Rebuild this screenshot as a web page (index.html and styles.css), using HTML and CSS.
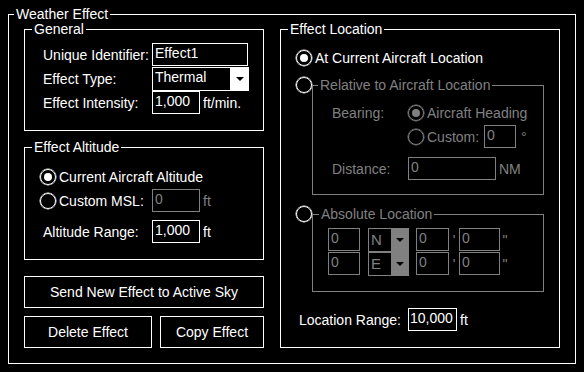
FILE: index.html
```html
<!DOCTYPE html>
<html>
<head>
    <title>Weather Effect</title>
    <link rel="stylesheet" href="styles.css">
</head>
<body>

    <fieldset class="group outer">
        <legend>Weather Effect</legend>
        <div class="columns">

            <div class="col-left">
                <fieldset class="group general">
                    <legend>General</legend>
                    <div class="row">
                        <span class="label">Unique Identifier:</span>
                        <input class="field id-field" value="Effect1">
                    </div>
                    <div class="row">
                        <span class="label">Effect Type:</span>
                        <div class="combo type-combo"><span class="combo-text">Thermal</span><span class="combo-drop"></span></div>
                    </div>
                    <div class="row">
                        <span class="label">Effect Intensity:</span>
                        <input class="field num" value="1,000"><span class="unit">ft/min.</span>
                    </div>
                </fieldset>

                <fieldset class="group altitude">
                    <legend>Effect Altitude</legend>
                    <div class="row">
                        <span class="radio on"></span><span class="radio-text">Current Aircraft Altitude</span>
                    </div>
                    <div class="row">
                        <span class="radio"></span><span class="radio-text short">Custom MSL:</span>
                        <input class="field num dis" value="0" disabled><span class="unit dis">ft</span>
                    </div>
                    <div class="row range-row">
                        <span class="label">Altitude Range:</span>
                        <input class="field num" value="1,000"><span class="unit">ft</span>
                    </div>
                </fieldset>

                <button class="btn send">Send New Effect to Active Sky</button>
                <div class="btn-row">
                    <button class="btn delete">Delete Effect</button>
                    <button class="btn copy">Copy Effect</button>
                </div>
            </div>

            <fieldset class="group location">
                <legend>Effect Location</legend>
                <div class="row">
                    <span class="radio on"></span><span class="radio-text">At Current Aircraft Location</span>
                </div>

                <div class="sub-row relative">
                    <span class="radio"></span>
                    <fieldset class="group sub dis">
                        <legend>Relative to Aircraft Location</legend>
                        <div class="row">
                            <span class="sub-label">Bearing:</span>
                            <span class="radio on"></span><span class="radio-text">Aircraft Heading</span>
                        </div>
                        <div class="row">
                            <span class="sub-label"></span>
                            <span class="radio"></span><span class="radio-text custom">Custom:</span>
                            <input class="field deg dis" value="0" disabled><span class="unit wide">°</span>
                        </div>
                        <div class="row distance-row">
                            <span class="sub-label">Distance:</span>
                            <input class="field dist dis" value="0" disabled><span class="unit">NM</span>
                        </div>
                    </fieldset>
                </div>

                <div class="sub-row absolute">
                    <span class="radio"></span>
                    <fieldset class="group sub dis">
                        <legend>Absolute Location</legend>
                        <div class="row coord">
                            <input class="field deg dis" value="0" disabled>
                            <div class="combo dir"><span class="combo-text">N</span><span class="combo-drop"></span></div>
                            <input class="field minute dis" value="0" disabled><span class="mark">'</span>
                            <input class="field second dis" value="0" disabled><span class="mark">"</span>
                        </div>
                        <div class="row coord">
                            <input class="field deg dis" value="0" disabled>
                            <div class="combo dir"><span class="combo-text">E</span><span class="combo-drop"></span></div>
                            <input class="field minute dis" value="0" disabled><span class="mark">'</span>
                            <input class="field second dis" value="0" disabled><span class="mark">"</span>
                        </div>
                    </fieldset>
                </div>

                <div class="row loc-range">
                    <span class="label">Location Range:</span>
                    <input class="field range" value="10,000"><span class="unit">ft</span>
                </div>
            </fieldset>

        </div>
    </fieldset>

</body>
</html>
```

FILE: styles.css
```css
body {
    margin: 0;
    padding: 6px 8px 0;
    background-color: #000;
    color: #fff;
    font: 14px/16px "Liberation Sans", Arial, sans-serif;
}

.group {
    margin: 0;
    padding: 0;
    border: 1px solid #fff;
    min-width: 0;
    box-sizing: border-box;
}

/* legends sit on the padding edge, so pull them back to the border */
.group legend {
    padding: 0 2px;
    line-height: 16px;
}

.outer {
    width: 568px;
}

.outer > legend {
    margin-left: 5px;
}

.columns {
    display: flex;
    gap: 16px;
    padding: 0 15px 15px;
    margin-top: -1px;
}

.col-left {
    width: 240px;
    flex: none;
}

.row {
    display: flex;
    align-items: center;
    height: 23px;
    margin-bottom: 1px;
}

.row:last-child {
    margin-bottom: 0;
}

.label {
    width: 109px;
    flex: none;
    white-space: nowrap;
}

.field {
    box-sizing: border-box;
    height: 23px;
    margin: 0;
    padding: 0 2px 3px;
    border: 1px solid #fff;
    background-color: #000;
    color: #fff;
    font: inherit;
    outline: none;
}

.field.dis {
    border-color: #808080;
    color: #808080;
}

.dis {
    color: #808080;
    border-color: #808080;
}

.unit {
    margin-left: 3px;
}

.id-field {
    width: 96px;
}

.num {
    width: 48px;
}

/* drop-down boxes */
.combo {
    display: flex;
    box-sizing: border-box;
    height: 24px;
    border: 1px solid #fff;
}

.combo-text {
    flex: 1;
    padding: 0 2px;
    line-height: 19px;
}

.combo-drop {
    width: 19px;
    background-color: #fff;
    margin: -1px -1px -1px 0;
    display: flex;
    align-items: center;
    justify-content: center;
}

.combo-drop::after {
    content: "";
    border-left: 4px solid transparent;
    border-right: 4px solid transparent;
    border-top: 4px solid #000;
}

.type-combo {
    width: 97px;
}

/* radio buttons */
.radio {
    width: 16px;
    height: 16px;
    box-sizing: border-box;
    border: 1px solid #fff;
    box-shadow: 0 0 0 0.5px #fff;
    border-radius: 50%;
    flex: none;
    display: flex;
    align-items: center;
    justify-content: center;
}

.radio.on::after {
    content: "";
    width: 8px;
    height: 8px;
    border-radius: 50%;
    background-color: #fff;
}

.radio-text {
    margin-left: 3px;
    white-space: nowrap;
}

.radio-text.short {
    width: 93px;
}

.general {
    height: 110px;
    padding: 6px 0 0 18px;
}

.general legend {
    margin-left: -11px;
}

.altitude {
    margin-top: 8px;
    padding: 10px 0 16px 15px;
}

.altitude legend {
    margin-left: -8px;
}

.altitude .range-row {
    margin-top: 8px;
    margin-left: 3px;
}

/* buttons */
.btn {
    display: block;
    box-sizing: border-box;
    height: 32px;
    margin: 0;
    padding: 0;
    border: 1px solid #fff;
    background-color: #000;
    color: #fff;
    font: inherit;
}

.send {
    width: 240px;
    margin-top: 16px;
}

.btn-row {
    display: flex;
    gap: 8px;
    margin-top: 8px;
}

.delete {
    width: 128px;
}

.copy {
    width: 104px;
}

/* right side */
.location {
    width: 280px;
    flex: none;
    padding: 9px 15px 0 15px;
}

.location > legend {
    margin-left: -8px;
}

.sub-row {
    display: flex;
    align-items: flex-start;
}

.sub-row .sub {
    flex: 1;
}

.relative {
    margin-top: 8px;
}

.relative .sub {
    height: 118px;
    padding: 8px 0 0 19px;
}

.relative .sub legend {
    margin-left: -14px;
}

.sub-label {
    width: 76px;
    flex: none;
}

.sub .radio {
    border-color: #808080;
    box-shadow: 0 0 0 0.5px #808080;
}

.sub .radio.on::after {
    background-color: #808080;
}

.radio-text.custom {
    width: 57px;
}

.deg {
    width: 32px;
}

.unit.wide {
    margin-left: 5px;
}

.distance-row {
    margin-top: 9px;
}

.dist {
    width: 88px;
}

.absolute {
    margin-top: 11px;
}

.absolute .sub {
    height: 86px;
    padding: 6px 0 0 15px;
}

.absolute .sub legend {
    margin-left: -9px;
}

.coord .combo {
    border-color: #808080;
    margin-left: 8px;
    width: 41px;
}

.coord .combo-text {
    line-height: 22px;
    font-size: 15px;
}

.coord .combo-drop {
    background-color: #808080;
    width: 18px;
}

.minute {
    width: 33px;
    margin-left: 7px;
}

.second {
    width: 41px;
}

.mark {
    width: 10px;
    text-align: center;
}

.loc-range {
    margin-top: 16px;
    margin-left: 3px;
}

.range {
    width: 49px;
    padding-left: 1px;
}
```
